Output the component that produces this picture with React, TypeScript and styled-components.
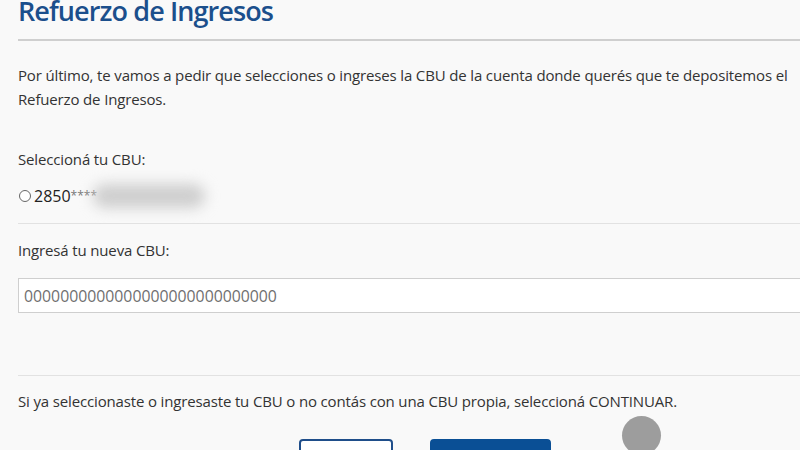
import React from 'react';
import styled, { createGlobalStyle } from 'styled-components';

const GlobalStyle = createGlobalStyle`
  html, body {
    margin: 0;
    padding: 0;
    background: #f9f9f9;
    overflow: hidden;
  }
  body {
    font-family: "Open Sans", "Noto Sans", sans-serif;
    color: #333;
  }
`;

const Page = styled.div`
  position: relative;
  width: 832px;
  height: 450px;
  padding-left: 18px;
  box-sizing: border-box;
  overflow: hidden;
`;

const Title = styled.h1`
  margin: -3px 0 0;
  font-size: 27px;
  line-height: 28px;
  font-weight: 600;
  color: #1b4f8c;
  letter-spacing: -0.9px;
`;

const Rule = styled.hr<{ $strong?: boolean }>`
  border: none;
  height: ${(p) => (p.$strong ? '2px' : '1px')};
  background: ${(p) => (p.$strong ? '#cfcfcf' : '#e2e2e2')};
  margin: 0;
`;

const Text = styled.p`
  margin: 0;
  font-size: 15px;
  line-height: 24px;
  letter-spacing: -0.15px;
  color: #333;
  max-width: 790px;
`;

const Section = styled.div<{ $top: number }>`
  padding-top: ${(p) => p.$top}px;
`;

const RadioRow = styled.label`
  display: flex;
  align-items: center;
  height: 24px;
  font-size: 16px;
  color: #222;
`;

const Radio = styled.span`
  width: 10px;
  height: 10px;
  border: 1px solid #666;
  border-radius: 50%;
  margin-left: 1px;
  margin-right: 3px;
  background: #fff;
`;

const Stars = styled.span`
  font-size: 12px;
  color: #777;
  align-self: flex-start;
  margin-top: 3px;
`;

const Blurred = styled.span`
  width: 112px;
  height: 24px;
  border-radius: 12px;
  background: #cecece;
  filter: blur(7px);
  margin-left: -4px;
`;

const Input = styled.input`
  display: block;
  width: 100%;
  height: 35px;
  box-sizing: border-box;
  border: 1px solid #cfcfcf;
  background: #fff;
  padding: 0 5px;
  font-family: inherit;
  font-size: 15.8px;
  color: #555;
  &::placeholder {
    color: #6f6f6f;
  }
`;

const Actions = styled.div`
  display: flex;
  justify-content: center;
  gap: 37px;
  padding-top: 26px;
`;

const Button = styled.button<{ $primary?: boolean }>`
  height: 40px;
  width: ${(p) => (p.$primary ? '121px' : '94px')};
  border-radius: 4px;
  border: 2px solid ${(p) => (p.$primary ? '#0a4f95' : '#1f4e8a')};
  background: ${(p) => (p.$primary ? '#0a4f95' : '#fff')};
  color: ${(p) => (p.$primary ? '#fff' : '#1f4e8a')};
  font-family: inherit;
  font-size: 15px;
`;

const TouchDot = styled.div`
  position: absolute;
  left: 622px;
  top: 416px;
  width: 39px;
  height: 39px;
  border-radius: 50%;
  background: #9d9d9d;
`;

export default function App() {
  return (
    <>
      <GlobalStyle />
      <Page>
        <Title>Refuerzo de Ingresos</Title>
        <Section $top={14}>
          <Rule $strong />
        </Section>
        <Section $top={22}>
          <Text>
            Por último, te vamos a pedir que selecciones o ingreses la CBU de la cuenta donde querés que te
            depositemos el Refuerzo de Ingresos.
          </Text>
        </Section>
        <Section $top={36}>
          <Text>Seleccioná tu CBU:</Text>
        </Section>
        <Section $top={13}>
          <RadioRow>
            <Radio />
            2850
            <Stars>****</Stars>
            <Blurred />
          </RadioRow>
        </Section>
        <Section $top={15}>
          <Rule />
        </Section>
        <Section $top={14}>
          <Text>Ingresá tu nueva CBU:</Text>
        </Section>
        <Section $top={16}>
          <Input placeholder="0000000000000000000000000000" />
        </Section>
        <Section $top={62}>
          <Rule />
        </Section>
        <Section $top={13}>
          <Text>Si ya seleccionaste o ingresaste tu CBU o no contás con una CBU propia, seleccioná CONTINUAR.</Text>
        </Section>
        <Actions>
          <Button />
          <Button $primary />
        </Actions>
        <TouchDot />
      </Page>
    </>
  );
}
